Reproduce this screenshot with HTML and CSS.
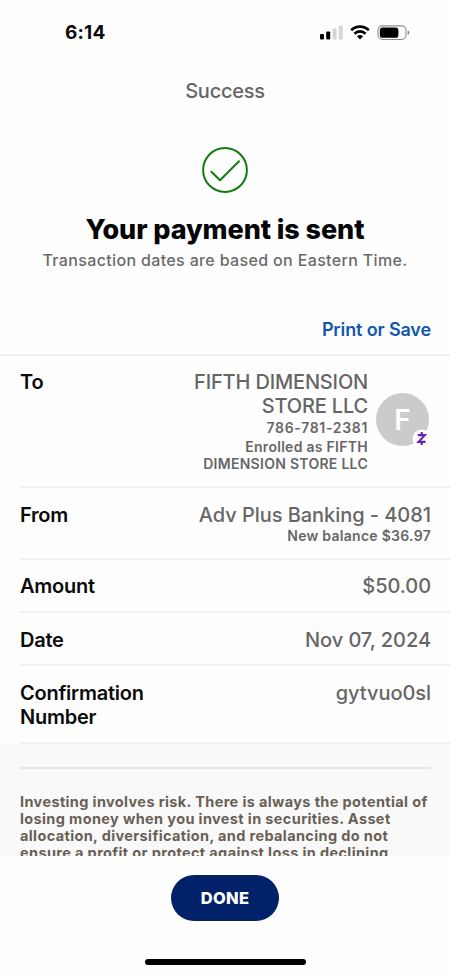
FILE: index.html
```html
<!DOCTYPE html>
<html lang="en">
<head>
<meta charset="utf-8">
<meta name="viewport" content="width=device-width, initial-scale=1">
<title>Success</title>
<link rel="stylesheet" href="styles.css">
</head>
<body>
<div class="screen">
  <header class="status">
    <span class="clock">6:14</span>
    <svg class="status-icons" width="90" height="16" viewBox="0 0 90 16">
      <rect x="0" y="9" width="4" height="5.4" rx="1"/>
      <rect x="6.2" y="6.6" width="4" height="7.8" rx="1"/>
      <rect x="12.6" y="3.6" width="4" height="10.8" rx="1" fill="#d4d4d4"/>
      <rect x="18.8" y="0.8" width="4" height="13.6" rx="1" fill="#d4d4d4"/>
      <g fill="none" stroke="#000" stroke-width="2.6">
        <path d="M31.2 5.2a12.6 12.6 0 0 1 17.6 0"/>
        <path d="M34.4 8.7a8 8 0 0 1 11.2 0"/>
      </g>
      <path d="M37 11.3a4.4 4.4 0 0 1 6 0l-3 3.1z"/>
      <rect x="58" y="0.9" width="28" height="13.6" rx="4.4" fill="none" stroke="#8e8e8e" stroke-width="1.1"/>
      <rect x="59.8" y="2.6" width="18.6" height="10.2" rx="2.9"/>
      <path d="M87.7 5.5q1.5.6 1.5 2.2t-1.5 2.2z" fill="#777"/>
    </svg>
  </header>
  <h1 class="nav-title">Success</h1>
  <section class="hero">
    <svg class="check" width="46" height="46" viewBox="0 0 46 46" fill="none" stroke="#107c10" stroke-width="2" stroke-linecap="round" stroke-linejoin="round">
      <circle cx="23" cy="23" r="21.9"/>
      <path d="M9.4 24.8l8.6 8.4L37 14.3"/>
    </svg>
    <h2 class="headline">Your payment is sent</h2>
    <p class="subtitle">Transaction dates are based on Eastern Time.</p>
  </section>
  <a class="print">Print or Save</a>
  <main class="details">
    <div class="row to">
      <span class="label">To</span>
      <div class="value">
        <div class="main name">FIFTH DIMENSION<br>STORE LLC</div>
        <div class="small phone">786-781-2381</div>
        <div class="small enrolled">Enrolled as FIFTH<br>DIMENSION STORE LLC</div>
      </div>
      <div class="avatar">
        <span class="initial">F</span>
        <svg class="badge" width="20" height="20" viewBox="0 0 20 20">
          <circle cx="10" cy="10" r="9.5" fill="#fff"/>
          <path d="M5.8 6.1h7L6.6 12.9h7M9.7 2.9v3M9.7 13v3" fill="none" stroke="#6420b8" stroke-width="2.1"/>
        </svg>
      </div>
    </div>
    <div class="row from">
      <span class="label">From</span>
      <div class="value">
        <div class="main account">Adv Plus Banking - 4081</div>
        <div class="small balance">New balance $36.97</div>
      </div>
    </div>
    <div class="row amount">
      <span class="label">Amount</span>
      <div class="value main">$50.00</div>
    </div>
    <div class="row date">
      <span class="label">Date</span>
      <div class="value main">Nov 07, 2024</div>
    </div>
    <div class="row confirmation">
      <span class="label">Confirmation<br>Number</span>
      <div class="value main code">gytvuo0sl</div>
    </div>
  </main>
  <section class="legal">
    <p class="legal-text">Investing involves risk. There is always the potential of<br>losing money when you invest in securities. Asset<br>allocation, diversification, and rebalancing do not<br>ensure a profit or protect against loss in declining</p>
  </section>
  <footer class="footer">
    <button class="done">DONE</button>
    <div class="home-indicator"></div>
  </footer>
</div>
</body>
</html>
```
FILE: styles.css
```css
* { box-sizing: border-box; margin: 0; padding: 0; }

body {
  font-family: Inter, "Liberation Sans", sans-serif;
  background: #fefefe;
  color: #0b0b0b;
}

.screen {
  display: flex;
  flex-direction: column;
  width: 450px;
  height: 975px;
  overflow: hidden;
  white-space: nowrap;
}

.status {
  display: flex;
  justify-content: space-between;
  height: 76px;
  padding: 22px 40px 0 65px;
}

.clock { font-size: 19px; font-weight: 700; line-height: 22px; letter-spacing: 0.2px; }
.status-icons { margin-top: 3px; }

.nav-title {
  height: 30px;
  font-size: 20px;
  font-weight: 500;
  line-height: 30px;
  letter-spacing: -0.25px;
  text-align: center;
  color: #666;
}

.hero {
  display: flex;
  flex-direction: column;
  align-items: center;
  height: 204px;
  padding-top: 41px;
}

.headline {
  margin-top: 21px;
  font-size: 27px;
  font-weight: 800;
  line-height: 32px;
  letter-spacing: -0.08px;
  color: #050505;
}

.subtitle {
  margin-top: 3px;
  font-size: 16px;
  font-weight: 550;
  line-height: 22px;
  letter-spacing: 0.35px;
  color: #6a6a6a;
}

.print {
  height: 44px;
  padding: 8px 19px 0 0;
  font-size: 18px;
  font-weight: 600;
  line-height: 24px;
  letter-spacing: -0.13px;
  text-align: right;
  color: #1157ae;
}

.details { border-top: 2px solid #f1f1f1; }

.row {
  display: flex;
  justify-content: space-between;
  margin-left: 20px;
  padding: 14px 19px 0 0;
  border-bottom: 2px solid #f2f2f2;
}

.label {
  font-size: 20px;
  font-weight: 600;
  line-height: 24px;
  letter-spacing: -0.25px;
}

.value { text-align: right; color: #666; }
.main { font-size: 20px; font-weight: 530; line-height: 24px; letter-spacing: -0.05px; }
.small { font-size: 14px; font-weight: 600; line-height: 17px; letter-spacing: 0.28px; }

.to { height: 132px; }
.to .value { margin-left: auto; }
.name { letter-spacing: -0.17px; }
.phone { margin-top: 1px; letter-spacing: 0.68px; }
.enrolled { margin-top: 2px; }
.from { height: 72px; padding-top: 15px; }
.amount { height: 53px; }
.date { height: 53px; padding-top: 15px; }
.confirmation { height: 78px; padding-top: 15px; }

.avatar {
  position: relative;
  display: flex;
  align-items: center;
  justify-content: center;
  width: 53px;
  height: 53px;
  margin: 23px 2px 0 8px;
  border-radius: 50%;
  background: #cbcbcb;
}

.initial { font-size: 28px; font-weight: 600; color: #fff; }
.badge { position: absolute; right: -3px; bottom: -3px; }

.legal {
  height: 112px;
  padding: 23px 19px 0 20px;
  overflow: hidden;
  background: #f9f9f9;
}

.legal-text {
  padding-top: 23.5px;
  border-top: 2px solid #e7e7e7;
  font-size: 14.5px;
  font-weight: 700;
  line-height: 17.2px;
  letter-spacing: 0.37px;
  color: #695f55;
}

.footer {
  display: flex;
  flex-direction: column;
  align-items: center;
  padding-top: 19px;
}

.done {
  width: 108px;
  height: 46px;
  border: 0;
  border-radius: 23px;
  background: #012169;
  color: #fff;
  font-family: inherit;
  font-size: 16.5px;
  font-weight: 800;
  letter-spacing: 0.3px;
}

.home-indicator {
  width: 161px;
  height: 6px;
  margin-top: 38px;
  border-radius: 3px;
  background: #000;
}
```
